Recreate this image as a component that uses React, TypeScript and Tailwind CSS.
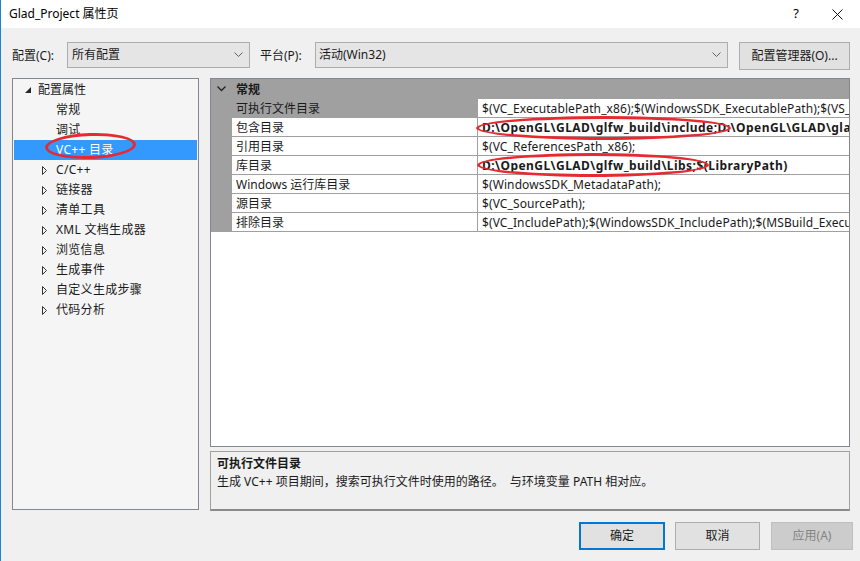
import React from 'react';

const font = { fontFamily: '"Noto Sans", "Noto Sans CJK SC", sans-serif' };

const Chevron = () => (
  <svg width="9" height="6" viewBox="0 0 9 6" className="text-[#606060]">
    <polyline points="0.5,0.5 4.5,4.5 8.5,0.5" fill="none" stroke="currentColor" strokeWidth="1" />
  </svg>
);

const Expanded = () => (
  <svg width="6" height="6" viewBox="0 0 6 6">
    <polygon points="6,0 6,6 0,6" fill="#262626" />
  </svg>
);

const Collapsed = () => (
  <svg width="5" height="9" viewBox="0 0 5 9">
    <polygon points="0.5,0.5 4.5,4.5 0.5,8.5" fill="none" stroke="#333" strokeWidth="1" />
  </svg>
);

const treeItems: { label: string; hasChildren: boolean; selected?: boolean }[] = [
  { label: '常规', hasChildren: false },
  { label: '调试', hasChildren: false },
  { label: 'VC++ 目录', hasChildren: false, selected: true },
  { label: 'C/C++', hasChildren: true },
  { label: '链接器', hasChildren: true },
  { label: '清单工具', hasChildren: true },
  { label: 'XML 文档生成器', hasChildren: true },
  { label: '浏览信息', hasChildren: true },
  { label: '生成事件', hasChildren: true },
  { label: '自定义生成步骤', hasChildren: true },
  { label: '代码分析', hasChildren: true },
];

const rows: { name: string; value: string; bold?: boolean; selected?: boolean }[] = [
  { name: '可执行文件目录', value: '$(VC_ExecutablePath_x86);$(WindowsSDK_ExecutablePath);$(VS_ExecutablePath);$(MSBuild_ExecutablePath)', selected: true },
  { name: '包含目录', value: 'D:\\OpenGL\\GLAD\\glfw_build\\include;D:\\OpenGL\\GLAD\\glad\\include;$(IncludePath)', bold: true },
  { name: '引用目录', value: '$(VC_ReferencesPath_x86);' },
  { name: '库目录', value: 'D:\\OpenGL\\GLAD\\glfw_build\\Libs;$(LibraryPath)', bold: true },
  { name: 'Windows 运行库目录', value: '$(WindowsSDK_MetadataPath);' },
  { name: '源目录', value: '$(VC_SourcePath);' },
  { name: '排除目录', value: '$(VC_IncludePath);$(WindowsSDK_IncludePath);$(MSBuild_ExecutablePath);$(VC_LibraryPath_x86);' },
];

export default function App() {
  return (
    <div
      className="relative w-[860px] h-[561px] bg-[#f0f0f0] border-l border-[#1883d7] flex flex-col text-[12px] text-[#1a1a1a] overflow-hidden"
      style={font}
    >
      {/* title bar */}
      <div className="h-[28px] bg-white flex items-center pl-[8px] shrink-0">
        <span className="text-[12px] text-black">Glad_Project 属性页</span>
        <span className="ml-auto mr-[33px] text-[13px] text-black">?</span>
        <svg width="11" height="11" viewBox="0 0 11 11" className="mr-[17px]">
          <line x1="0.5" y1="0.5" x2="10.5" y2="10.5" stroke="#111" strokeWidth="1" />
          <line x1="10.5" y1="0.5" x2="0.5" y2="10.5" stroke="#111" strokeWidth="1" />
        </svg>
      </div>

      {/* config row */}
      <div className="flex items-start mt-[14px] pl-[11px] h-[28px] shrink-0">
        <span className="h-[27px] flex items-center w-[55px]">配置(C):</span>
        <div className="w-[183px] h-[26px] bg-[#e5e5e5] border border-[#acacac] flex items-center pl-[4px] pr-[6px]">
          <span>所有配置</span>
          <span className="ml-auto"><Chevron /></span>
        </div>
        <span className="h-[27px] flex items-center ml-[10px] w-[55px]">平台(P):</span>
        <div className="w-[413px] h-[26px] bg-[#e5e5e5] border border-[#acacac] flex items-center pl-[3px] pr-[6px]">
          <span>活动(Win32)</span>
          <span className="ml-auto"><Chevron /></span>
        </div>
        <div className="ml-[11px] w-[111px] h-[28px] bg-[#e1e1e1] border border-[#adadad] flex items-center justify-center">
          配置管理器(O)...
        </div>
      </div>

      {/* main */}
      <div className="flex mt-[8px] pl-[11px] shrink-0">
        {/* tree */}
        <div className="w-[187px] h-[432px] bg-[#f5f5f5] border border-[#828790] px-[1px] pt-[1px]">
          <div className="h-[20px] flex items-center">
            <span className="w-[17px] flex justify-end"><Expanded /></span>
            <span className="ml-[7px]">配置属性</span>
          </div>
          {treeItems.map((it) => (
            <div
              key={it.label}
              className={`h-[20px] flex items-center ${it.selected ? 'bg-[#3399ff] text-white' : ''}`}
            >
              <span className="w-[42px] flex justify-end pr-[9px]">{it.hasChildren ? <Collapsed /> : null}</span>
              <span className="tracking-[0.3px]">{it.label}</span>
            </div>
          ))}
        </div>

        {/* right column */}
        <div className="ml-[11px] w-[640px] flex flex-col">
          <div className="h-[369px] bg-white border border-[#828790] overflow-hidden">
            <div className="h-[20px] bg-[#a0a0a0] flex items-center">
              <span className="w-[21px] flex justify-center">
                <svg width="9" height="6" viewBox="0 0 9 6">
                  <polyline points="0.5,0.5 4.5,4.5 8.5,0.5" fill="none" stroke="#222" strokeWidth="1.3" />
                </svg>
              </span>
              <span className="ml-[4px] font-bold pt-[1px]">常规</span>
            </div>
            {rows.map((r) => (
              <div key={r.name} className="h-[19px] flex">
                <div className="w-[21px] bg-[#a0a0a0] shrink-0" />
                <div
                  className={`w-[246px] shrink-0 border-b border-r border-[#a0a0a0] pl-[4px] pt-[1px] flex items-center ${r.selected ? 'bg-[#a0a0a0]' : ''}`}
                >
                  {r.name}
                </div>
                <div
                  className={`flex-1 min-w-0 border-b border-[#a0a0a0] pl-[4px] pt-[1px] flex items-center whitespace-nowrap overflow-hidden ${r.bold ? 'font-bold tracking-[0.45px]' : 'tracking-[0.1px]'}`}
                >
                  {r.value}
                </div>
              </div>
            ))}
          </div>

          <div className="mt-[4px] h-[60px] border border-[#a0a0a0] border-b-2 border-b-[#8a8a8a] px-[6px] pt-[3px] leading-[18px]">
            <div className="font-bold">可执行文件目录</div>
            <div>生成 VC++ 项目期间，搜索可执行文件时使用的路径。&nbsp; 与环境变量 PATH 相对应。</div>
          </div>
        </div>
      </div>

      {/* buttons */}
      <div className="flex mt-[11px] pl-[578px] shrink-0">
        <div className="w-[86px] h-[28px] bg-[#e1e1e1] border-2 border-[#0078d7] flex items-center justify-center">确定</div>
        <div className="ml-[10px] w-[85px] h-[28px] bg-[#e1e1e1] border border-[#adadad] flex items-center justify-center">取消</div>
        <div className="ml-[11px] w-[82px] h-[28px] bg-[#cccccc] border border-[#bfbfbf] text-[#838383] flex items-center justify-center">应用(A)</div>
      </div>

      {/* red annotation ellipses */}
      <div className="absolute left-[44px] top-[133px] w-[91px] h-[26px] rounded-[50%] border-[3px] border-[#e52a31] -rotate-2" />
      <div className="absolute left-[475px] top-[116px] w-[255px] h-[24px] rounded-[50%] border-[3px] border-[#e52a31]" />
      <div className="absolute left-[476px] top-[153px] w-[232px] h-[24px] rounded-[50%] border-[3px] border-[#e52a31]" />
    </div>
  );
}
